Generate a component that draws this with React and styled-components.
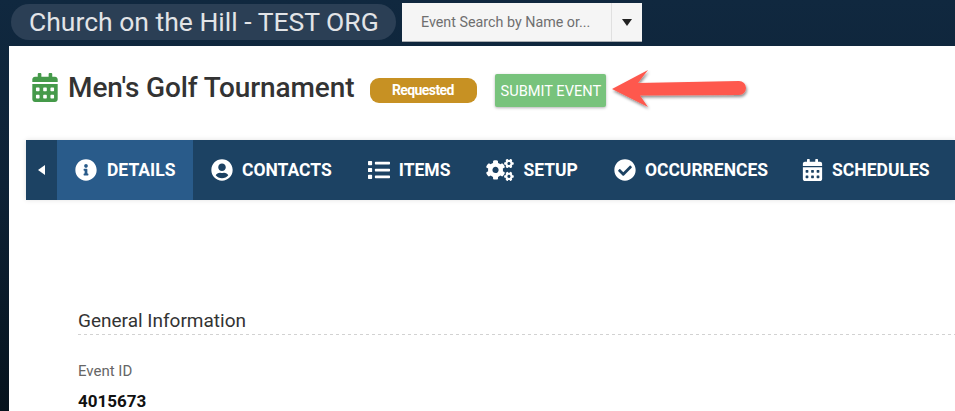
import React from "react";
import styled, { createGlobalStyle } from "styled-components";
import { FaCalendarAlt, FaInfoCircle, FaUserCircle, FaList, FaCogs, FaCheckCircle } from "react-icons/fa";

const GlobalStyle = createGlobalStyle`
    html, body {
        margin: 0;
        height: 100%;
        overflow: hidden;
        font-family: Roboto, "Liberation Sans", sans-serif;
    }
`;

const Page = styled.div`
    width: 955px;
    height: 411px;
    overflow: hidden;
    background: linear-gradient(180deg, #10283f 0%, #0e2236 45%, #06131d 100%);
`;

const TopBar = styled.div`
    height: 46px;
    box-sizing: border-box;
    padding: 3px 0 0 11px;
    display: flex;
    align-items: flex-start;
    gap: 6px;
`;

const OrgPill = styled.div`
    width: 385px;
    height: 36px;
    margin-top: 1px;
    box-sizing: border-box;
    padding-left: 18px;
    border-radius: 18px;
    background: #2b3f55;
    color: #e2e4e7;
    font-size: 26.5px;
    line-height: 36px;
    white-space: nowrap;
`;

const SearchBox = styled.div`
    width: 240px;
    height: 39px;
    display: flex;
    background: #f5f5f5;
    border-bottom: 1px solid #a9adb1;
    box-sizing: border-box;
`;

const SearchText = styled.div`
    flex: 1;
    padding-left: 19px;
    color: #6f6f6f;
    font-size: 14.3px;
    line-height: 38px;
    white-space: nowrap;
`;

const SearchCaret = styled.div`
    width: 30px;
    display: flex;
    align-items: center;
    justify-content: center;
    border-left: 1px solid #e0e0e0;
    &::after {
        content: "";
        border-top: 7px solid #222;
        border-left: 5px solid transparent;
        border-right: 5px solid transparent;
    }
`;

const Panel = styled.div`
    position: relative;
    height: 365px;
    margin-left: 9px;
    background: #fff;
    box-sizing: border-box;
    padding: 27px 0 0 17px;
`;

const Header = styled.div`
    height: 67px;
    display: flex;
    align-items: flex-start;
`;

const TitleIcon = styled(FaCalendarAlt)`
    width: 26px;
    height: 29px;
    margin: 0 5px 0 6px;
    color: #459a4a;
`;

const Title = styled.h1`
    margin: 0 16px 0 5px;
    color: #333;
    font-size: 28px;
    font-weight: 500;
    letter-spacing: -0.1px;
    line-height: 30px;
    white-space: nowrap;
`;

const Badge = styled.span`
    width: 107px;
    height: 25px;
    box-sizing: border-box;
    padding-right: 2px;
    margin-top: 5px;
    border-radius: 9px;
    background: #c79123;
    color: #fff;
    font-size: 14px;
    font-weight: 700;
    letter-spacing: -0.6px;
    line-height: 25px;
    text-align: center;
`;

const SubmitButton = styled.button`
    width: 111px;
    height: 33px;
    margin: 1px 0 0 18px;
    padding: 0;
    border: 0;
    border-radius: 2px;
    background: #78c37c;
    box-shadow: 0 1px 3px rgba(0, 0, 0, 0.3);
    color: #fff;
    font-family: inherit;
    font-size: 14.6px;
    white-space: nowrap;
`;

const Arrow = styled.svg`
    position: absolute;
    left: 601px;
    top: 22px;
    overflow: visible;
`;

const Tabs = styled.nav`
    height: 60px;
    display: flex;
    background: #1c4263;
    box-shadow: 0 0 5px rgba(0, 0, 0, 0.12);
`;

const Collapse = styled.div`
    width: 31px;
    display: flex;
    align-items: center;
    justify-content: center;
    &::after {
        content: "";
        border-right: 7px solid #fff;
        border-top: 5px solid transparent;
        border-bottom: 5px solid transparent;
    }
`;

const Tab = styled.div`
    display: flex;
    align-items: center;
    gap: ${(p) => p.$gap || 9}px;
    height: 100%;
    box-sizing: border-box;
    padding: 0 18px;
    margin-left: ${(p) => p.$shift || 0}px;
    background: ${(p) => (p.$active ? "#295b8a" : "transparent")};
    color: #fff;
    font-size: 17.5px;
    font-weight: 700;
    white-space: nowrap;
    svg {
        width: ${(p) => p.$iconWidth || 22}px;
        height: 22px;
        flex-shrink: 0;
    }
`;

const Section = styled.section`
    padding: 110px 0 0 52px;
`;

const SectionTitle = styled.div`
    height: 25px;
    background: repeating-linear-gradient(90deg, #d2d2d2 0 3px, transparent 3px 6px) bottom left / 100% 1px no-repeat;
    color: #333;
    font-size: 19px;
    line-height: 22px;
    box-sizing: border-box;
`;

const FieldLabel = styled.div`
    margin-top: 26px;
    color: #666;
    font-size: 15px;
    line-height: 20px;
`;

const FieldValue = styled.div`
    margin-top: 10px;
    color: #111;
    font-size: 17px;
    font-weight: 700;
    line-height: 20px;
`;

const App = () => (
    <Page>
        <GlobalStyle />
        <TopBar>
            <OrgPill>Church on the Hill - TEST ORG</OrgPill>
            <SearchBox>
                <SearchText>Event Search by Name or...</SearchText>
                <SearchCaret />
            </SearchBox>
        </TopBar>
        <Panel>
            <Header>
                <TitleIcon />
                <Title>Men's Golf Tournament</Title>
                <Badge>Requested</Badge>
                <SubmitButton>SUBMIT EVENT</SubmitButton>
            </Header>
            <Arrow width="136" height="40" viewBox="0 0 136 40">
                <defs>
                    <filter id="arrowShadow" x="-10%" y="-30%" width="120%" height="170%">
                        <feDropShadow dx="1" dy="2" stdDeviation="1.5" floodColor="#000" floodOpacity="0.45" />
                    </filter>
                </defs>
                <path
                    d="M2 21 L38 2 L28 15 L129 13 A7 7 0 0 1 129 27 L30 27.5 L38 39 Z"
                    fill="#fe584e"
                    filter="url(#arrowShadow)"
                />
            </Arrow>
            <Tabs>
                <Collapse />
                <Tab $active $gap={10}><FaInfoCircle />DETAILS</Tab>
                <Tab $gap={8.5}><FaUserCircle />CONTACTS</Tab>
                <Tab><FaList />ITEMS</Tab>
                <Tab $iconWidth={28}><FaCogs />SETUP</Tab>
                <Tab><FaCheckCircle />OCCURRENCES</Tab>
                <Tab $iconWidth={21} $shift={-2}><FaCalendarAlt />SCHEDULES</Tab>
            </Tabs>
            <Section>
                <SectionTitle>General Information</SectionTitle>
                <FieldLabel>Event ID</FieldLabel>
                <FieldValue>4015673</FieldValue>
            </Section>
        </Panel>
    </Page>
);

export default App;
